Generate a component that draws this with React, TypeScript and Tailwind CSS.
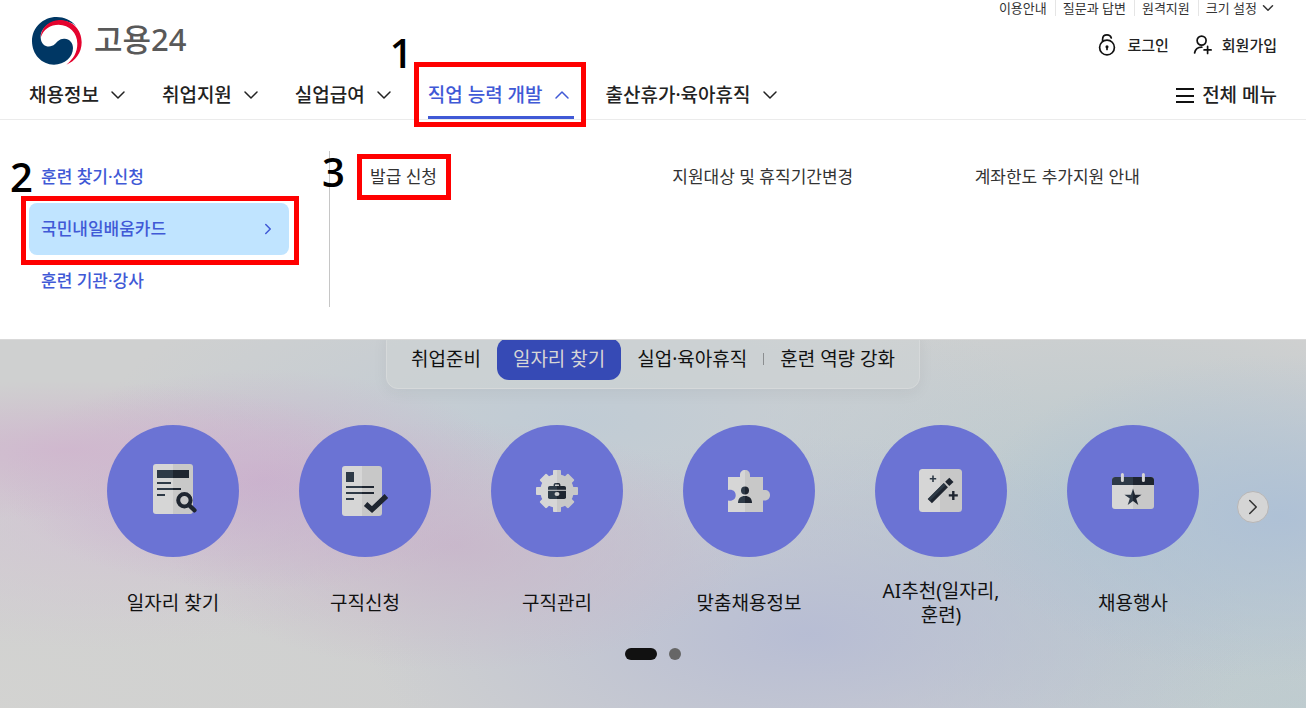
import React from 'react';

import clsx from 'clsx';
import { ChevronDown, ChevronRight, ChevronUp } from 'lucide-react';


const UTIL_LINKS = ['이용안내', '질문과 답변', '원격지원'];

const MAIN_MENU = [
    { text: '채용정보' },
    { text: '취업지원' },
    { text: '실업급여' },
    { text: '직업 능력 개발', active: true, mark: '1' },
    { text: '출산휴가·육아휴직' },
];

const SIDE_MENU = [
    { text: '훈련 찾기·신청' },
    { text: '국민내일배움카드', active: true, mark: '2' },
    { text: '훈련 기관·강사' },
];

const SUB_MENU = [
    { text: '발급 신청', mark: '3' },
    { text: '지원대상 및 휴직기간변경' },
    { text: '계좌한도 추가지원 안내' },
];

// red guide box with its step number, drawn over the parent element
const GuideBox = ({ className, numberClassName, step }: { className: string; numberClassName: string; step: string }) => (
    <>
        <span className={clsx('pointer-events-none absolute z-10 border-[5px] border-[#ff0000]', className)} />
        <span className={clsx("pointer-events-none absolute z-10 font-['Open_Sans',sans-serif] text-[40px] leading-[40px] font-semibold text-black", numberClassName)}>
            {step}
        </span>
    </>
);

const Logo = () => (
    <a href="#" className="flex items-center gap-3 pl-[3px]">
        <svg width="50" height="48" viewBox="0 0 150 144" aria-hidden="true">
            <path
                fill="#003764"
                d="M133 27C116 9 96 0 74 0C33 0 0 32 0 72C0 112 29 143 66 143C98 143 123 120 123 93C123 76 112 66 98 65C82 64 76 74 68 82C56 93 28 92 26 62C24 38 48 12 82 11C102 10 120 16 133 27Z"
            />
            <path
                fill="#e4032e"
                d="M26 62C28 30 52 10 82 9C122 9 149 38 149 76C149 107 130 133 103 143C125 125 136 105 136 80C136 48 112 23 80 23C56 23 34 36 26 62Z"
            />
        </svg>
        <span className="pb-1 text-[31px] leading-9 font-medium text-[#595959]">고용24</span>
    </a>
);

const LockIcon = () => (
    <svg width="18" height="24" viewBox="0 0 18 24" fill="none" stroke="#111" strokeWidth="1.7" strokeLinecap="round" aria-hidden="true">
        <circle cx="9" cy="14.5" r="7.4" />
        <path d="M4.6 8.3V6.2C4.6 3.6 6.4 1.9 9 1.9C11.2 1.9 12.7 3 13.3 4.9" />
        <circle cx="9" cy="13.8" r="0.7" fill="#111" />
        <path d="M9 14V16.4" />
    </svg>
);

const JoinIcon = () => (
    <svg width="20" height="24" viewBox="0 0 20 24" fill="none" stroke="#111" strokeWidth="1.7" strokeLinecap="round" aria-hidden="true">
        <circle cx="8.6" cy="7.6" r="4.5" />
        <path d="M1.6 20C2.2 16.4 4.6 14.3 8.8 14.2" />
        <path d="M14.6 13.4V20.4M11.1 16.9H18.1" />
    </svg>
);

// two tone fill : left half is lighter than right half
const TwoTone = ({ id, split }: { id: string; split: number }) => (
    <defs>
        <linearGradient id={`${id}-light`} gradientUnits="userSpaceOnUse" x1={split - 1} x2={split + 1} y1="0" y2="0">
            <stop offset="0.5" stopColor="#d6d6d6" />
            <stop offset="0.5" stopColor="#c8c8c8" />
        </linearGradient>
        <linearGradient id={`${id}-dark`} gradientUnits="userSpaceOnUse" x1={split - 1} x2={split + 1} y1="0" y2="0">
            <stop offset="0.5" stopColor="#2e3a47" />
            <stop offset="0.5" stopColor="#1e2530" />
        </linearGradient>
    </defs>
);

const SearchDocIcon = () => (
    <>
        <TwoTone id="search" split={66} />
        <rect x="46" y="39" width="40" height="50" rx="3" fill="url(#search-light)" />
        <path fill="url(#search-dark)" d="M50 45H82V53H50ZM50 57H64V59H50ZM50 63H74V65H50ZM50 69H58V71H50Z" />
        <circle cx="77.4" cy="75.3" r="6.2" fill="none" stroke="#1e2530" strokeWidth="4" />
        <path d="M82 80L87.4 85.3" stroke="#1e2530" strokeWidth="4.4" strokeLinecap="round" />
    </>
);

const CheckDocIcon = () => (
    <>
        <TwoTone id="check" split={63} />
        <rect x="43" y="41" width="40" height="50" rx="3" fill="url(#check-light)" />
        <path fill="url(#check-dark)" d="M47 47H55V57H47ZM47 61H75V63H47ZM47 67H75V69H47ZM47 73H55V75H47Z" />
        <path d="M66.6 79L73 84.6L87.4 71" fill="none" stroke="#1e2530" strokeWidth="5.2" />
    </>
);

const GearIcon = () => (
    <>
        <TwoTone id="gear" split={66} />
        <circle cx="66" cy="66" r="16.8" fill="url(#gear-light)" />
        <path
            fill="url(#gear-light)"
            d="M62.8 45H69.2Q70 45 70 46V86Q70 87 69.2 87H62.8Q62 87 62 86V46Q62 45 62.8 45ZM45 62.8V69.2Q45 70 46 70H86Q87 70 87 69.2V62.8Q87 62 86 62H46Q45 62 45 62.8ZM49 54.5L54.5 49Q55.2 48.6 56 49.3L83 76.3Q83.4 77 83 77.5L77.5 83Q76.8 83.4 76 82.7L49.3 56Q48.6 55.2 49 54.5ZM77.5 49L83 54.5Q83.4 55.2 82.7 56L56 82.7Q55.2 83.4 54.5 83L49 77.5Q48.6 76.8 49.3 76L76 49.3Q76.8 48.6 77.5 49Z"
        />
        <path d="M63.3 61V59.8Q63.3 58.8 64.5 58.8H67.5Q68.7 58.8 68.7 59.8V61" fill="none" stroke="url(#gear-dark)" strokeWidth="1.4" />
        <rect x="57" y="61" width="18" height="13" rx="1.8" fill="url(#gear-dark)" />
        <path d="M57 65.3H75" stroke="#cfcfcf" strokeWidth="1" />
        <ellipse cx="66" cy="69" rx="2.5" ry="2" fill="#cfcfcf" />
    </>
);

const PuzzleIcon = () => (
    <>
        <TwoTone id="puzzle" split={62} />
        <path
            fill="url(#puzzle-light)"
            d="M45 52H57V50C57 47 59 45 62 45C65 45 67 47 67 50V52H80V65H81.8C85 65 87 67 87 70C87 73 85 75.5 81.8 75.5H80V87H45V75.5C49.5 76.5 52.7 74 52.7 70.2C52.7 66.4 49.5 64 45 65Z"
        />
        <circle cx="62" cy="65.6" r="4" fill="url(#puzzle-dark)" />
        <path d="M55 78C55 73.6 57.6 71 62 71C66.4 71 69 73.6 69 78Z" fill="url(#puzzle-dark)" />
    </>
);

const WandIcon = () => (
    <>
        <TwoTone id="wand" split={65.5} />
        <rect x="44" y="44" width="43" height="43" rx="3.5" fill="url(#wand-light)" />
        <path d="M58 50.5V57M54.8 53.7H61.2" stroke="#2e3a47" strokeWidth="1.6" />
        <path d="M78.3 66V75M73.8 70.4H82.8" stroke="#1e2530" strokeWidth="2.4" />
        <path d="M54.8 76.2L70.8 60.2" stroke="#1e2530" strokeWidth="6" />
        <path d="M54.2 74.8L69.8 59.2" stroke="#2e3a47" strokeWidth="2.6" />
        <path d="M72.2 58.8L76.4 54.8" stroke="#1e2530" strokeWidth="6" />
    </>
);

const CalendarIcon = () => (
    <>
        <TwoTone id="cal" split={66} />
        <rect x="45" y="52" width="42" height="32" rx="3" fill="url(#cal-light)" />
        <path d="M45 60V55Q45 52 48 52H84Q87 52 87 55V60Z" fill="url(#cal-dark)" />
        <path d="M55.4 49.5V55.5M76.4 49.5V55.5" stroke="#d6d6d6" strokeWidth="3" strokeLinecap="round" />
        <path d="M66 63.4L68 69.7H74.6L69.2 73.6L71.3 79.9L66 76L60.7 79.9L62.8 73.6L57.4 69.7H64Z" fill="url(#cal-dark)" />
    </>
);

const SERVICES = [
    { text: '일자리 찾기', icon: <SearchDocIcon /> },
    { text: '구직신청', icon: <CheckDocIcon /> },
    { text: '구직관리', icon: <GearIcon /> },
    { text: '맞춤채용정보', icon: <PuzzleIcon /> },
    { text: 'AI추천(일자리, 훈련)', icon: <WandIcon /> },
    { text: '채용행사', icon: <CalendarIcon /> },
];

const Header = () => (
    <header className="border-b border-[#ebebeb] bg-white px-[29px]">
        <div className="flex h-4 items-center justify-end text-[13px] leading-4 text-[#333]">
            {UTIL_LINKS.map((text) => (
                <a key={text} href="#" className="mr-[7px] border-r border-[#e5e5e5] pr-2">
                    {text}
                </a>
            ))}
            <button type="button" className="flex items-center gap-0.5">
                크기 설정
                <ChevronDown size={18} strokeWidth={2} />
            </button>
        </div>
        <div className="flex h-[55px] items-center justify-between">
            <div className="pb-[5px]">
                <Logo />
            </div>
            <div className="flex items-center gap-6 pt-[3px] text-[15px] leading-6 font-medium text-[#222]">
                <a href="#" className="flex items-center gap-[11px]">
                    <LockIcon />
                    로그인
                </a>
                <a href="#" className="flex items-center gap-[9px]">
                    <JoinIcon />
                    회원가입
                </a>
            </div>
        </div>
        <div className="flex h-12 items-stretch justify-between text-[19px] font-medium text-[#222]">
            <nav className="flex gap-8">
                {MAIN_MENU.map((menu) => (
                    <button
                        key={menu.text}
                        type="button"
                        className={clsx('relative flex items-center gap-[7px] border-b-[3px] pt-[3px] whitespace-nowrap', menu.active ? 'border-[#4059d6] text-[#4059d6]' : 'border-transparent')}
                    >
                        {menu.text}
                        {menu.active ? <ChevronUp size={24} strokeWidth={1.5} /> : <ChevronDown size={24} strokeWidth={1.5} />}
                        {menu.mark && <GuideBox step={menu.mark} className="-top-[9px] -right-3 -bottom-[11px] -left-[14px]" numberClassName="-top-[38px] -left-[38px]" />}
                    </button>
                ))}
            </nav>
            <button type="button" className="flex items-center gap-2">
                <svg width="18" height="16" viewBox="0 0 18 16" stroke="#111" strokeWidth="2" aria-hidden="true">
                    <path d="M0 2H18M0 9H18M0 15H18" />
                </svg>
                전체 메뉴
            </button>
        </div>
    </header>
);

const MegaMenu = () => (
    <div className="flex border-b border-[#d9d9d9] bg-white px-[29px] pt-[31px] pb-8 text-[17px] leading-6">
        <ul className="mr-10 w-[260px] shrink-0 font-medium text-[#4059d6]">
            {SIDE_MENU.map((menu) => (
                <li key={menu.text} className="relative">
                    <a href="#" className={clsx('flex h-[52px] items-center justify-between rounded-lg px-3', menu.active && 'bg-[#c0e4ff]')}>
                        {menu.text}
                        {menu.active && <ChevronRight size={18} strokeWidth={2} />}
                    </a>
                    {menu.mark && <GuideBox step={menu.mark} className="-top-[7px] -right-[10px] -bottom-[10px] -left-2" numberClassName="-top-[46px] -left-[19px]" />}
                </li>
            ))}
        </ul>
        <ul className="grid flex-1 grid-cols-3 border-l border-[#c6c6c6] pl-10 text-[#333]">
            {SUB_MENU.map((menu) => (
                <li key={menu.text} className="pt-[14px]">
                    <a href="#" className="relative inline-block">
                        {menu.text}
                        {menu.mark && <GuideBox step={menu.mark} className="-top-[11px] -right-[14px] -bottom-[11px] -left-[13px]" numberClassName="-top-[13px] -left-[48px]" />}
                    </a>
                </li>
            ))}
        </ul>
    </div>
);

const Hero = () => (
    <main className="flex flex-1 flex-col items-center overflow-hidden bg-[#cfd0d0] bg-[radial-gradient(ellipse_24%_19%_at_5%_30%,#d0b6cedd,transparent),radial-gradient(ellipse_20%_30%_at_20%_38%,#c9b0cdee,transparent),radial-gradient(ellipse_22%_34%_at_35%_56%,#c8b5cadd,transparent),radial-gradient(ellipse_26%_34%_at_8%_50%,#d2c6d3dd,transparent),radial-gradient(ellipse_24%_44%_at_98%_48%,#adc0d6ee,transparent),radial-gradient(ellipse_34%_54%_at_62%_80%,#b6bcd4ee,transparent),radial-gradient(ellipse_36%_44%_at_44%_22%,#bfcbd5ee,transparent),radial-gradient(ellipse_30%_60%_at_84%_50%,#b3c7cedd,transparent),radial-gradient(ellipse_34%_60%_at_0%_100%,#d3d3d1ee,transparent),radial-gradient(ellipse_30%_50%_at_100%_100%,#bccbcfdd,transparent)]">
        <div className="-mt-[11px] flex rounded-xl border border-[#d6d9da] bg-[#cfd3d4]/60 p-2 text-[19px] leading-[26px] text-[#111] shadow-[0_4px_16px_rgba(0,0,0,0.05)]">
            <button type="button" className="h-[42px] px-4">취업준비</button>
            <button type="button" className="h-[42px] rounded-xl bg-[#364ab5] px-4 text-[#d6d6d6]">일자리 찾기</button>
            <button type="button" className="h-[42px] px-4">실업·육아휴직</button>
            <span className="h-3 w-px self-center bg-[#8b8e90]" />
            <button type="button" className="h-[42px] px-4">훈련 역량 강화</button>
        </div>
        <div className="mt-9 flex w-full justify-center">
            <div className="w-[77px] shrink" />
            <ul className="grid max-w-[1152px] flex-1 grid-cols-6">
                {SERVICES.map((service) => (
                    <li key={service.text}>
                        <a href="#" className="flex flex-col items-center gap-[22px]">
                            <svg width="132" height="132" viewBox="0 0 132 132" className="rounded-full bg-[#6b73d4]" aria-hidden="true">
                                {service.icon}
                            </svg>
                            <span className="flex h-12 w-[132px] items-center justify-center text-center text-[19px] leading-6 break-keep text-[#111]">{service.text}</span>
                        </a>
                    </li>
                ))}
            </ul>
            <div className="w-[77px] pt-[66px] pl-2">
                <button type="button" aria-label="다음" className="flex size-8 items-center justify-center rounded-full border border-[#b8b6b6] bg-[#d5d5d5] text-[#333]">
                    <ChevronRight size={26} strokeWidth={1.4} />
                </button>
            </div>
        </div>
        <div className="mt-[21px] mb-12 flex gap-3">
            <button type="button" aria-label="1 페이지" className="h-3 w-8 rounded-full bg-[#111]" />
            <button type="button" aria-label="2 페이지" className="size-3 rounded-full bg-[#666]" />
        </div>
    </main>
);

const App = () => {
    return (
        <div className="flex min-h-screen flex-col font-['Noto_Sans','Noto_Sans_CJK_KR',sans-serif]">
            <Header />
            <MegaMenu />
            <Hero />
        </div>
    );
};

export default App;
